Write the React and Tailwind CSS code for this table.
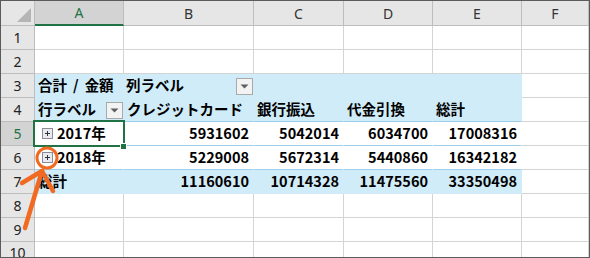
import React from 'react';

// Sheet geometry: row header + columns A..F, header row + rows 1..10
const COLS = ['A', 'B', 'C', 'D', 'E', 'F'];
const ROWS = [1, 2, 3, 4, 5, 6, 7, 8, 9, 10];

const cellFont = { fontFamily: '"Noto Sans CJK JP", "Noto Sans", sans-serif' };
const headFont = { fontFamily: '"Noto Sans", "Liberation Sans", sans-serif' };

const pivotRows = {
    5: { label: '2017年', values: ['5931602', '5042014', '6034700', '17008316'] },
    6: { label: '2018年', values: ['5229008', '5672314', '5440860', '16342182'] },
    7: { label: '総計', values: ['11160610', '10714328', '11475560', '33350498'] },
};

const FilterButton = () => (
    <span className="ml-auto mb-[1px] w-[17px] h-[17px] shrink-0 flex items-center justify-center border border-[#a9a9a9] bg-[#f3f3f3]">
        <svg width="9" height="5" viewBox="0 0 9 5">
            <path d="M0.5 0.5 L8.5 0.5 L4.5 4.5 Z" fill="#5f5f5f" />
        </svg>
    </span>
);

const ExpandBox = () => (
    <svg width="11" height="11" viewBox="0 0 11 11" className="shrink-0 mr-[4px]">
        <rect x="0.5" y="0.5" width="10" height="10" fill="#e9e9f0" stroke="#8b8b99" />
        <path d="M3 5.5 H8 M5.5 3 V8" stroke="#333" strokeWidth="1" />
    </svg>
);

// Contents and styling for one body cell
const renderCell = (row, colIdx) => {
    const inPivot = row >= 3 && row <= 7 && colIdx <= 4;
    if (!inPivot) {
        return { cls: 'bg-white border-r border-b border-[#d4d4d4]', body: null };
    }

    const blueRow = row === 3 || row === 4 || row === 7;
    const bg = blueRow ? 'bg-[#d0ecf9]' : 'bg-white';
    const right = blueRow ? 'border-r border-r-[#d0ecf9]' : 'border-r border-r-white';
    const bottom = row === 3 || row === 7 ? 'border-b border-b-[#d0ecf9]' : 'border-b border-b-[#9dcfea]';
    const cls = `${bg} ${right} ${bottom}`;

    let body = null;
    if (row === 3) {
        if (colIdx === 0) body = (
            <span className="self-center pl-[3px]">
                合計<span className="mx-[6px]">/</span>金額
            </span>
        );
        if (colIdx === 1) body = (
            <>
                <span className="self-center pl-[2px]">列ラベル</span>
                <FilterButton />
            </>
        );
    } else if (row === 4) {
        const heads = ['行ラベル', 'クレジットカード', '銀行振込', '代金引換', '総計'];
        body = (
            <>
                <span className="self-center pl-[3px] whitespace-nowrap">{heads[colIdx]}</span>
                {colIdx === 0 && <FilterButton />}
            </>
        );
    } else {
        const data = pivotRows[row];
        if (colIdx === 0) {
            body = row === 7 ? (
                <span className="self-center pl-[3px]">{data.label}</span>
            ) : (
                <span className="self-center pl-[7px] flex items-center">
                    <ExpandBox />
                    {data.label}
                </span>
            );
        } else {
            body = <span className="self-center ml-auto pr-[4px]">{data.values[colIdx - 1]}</span>;
        }
    }
    return { cls, body };
};

const App = () => {
    return (
        <div className="w-[590px] h-[258px] bg-white">
            <div className="relative w-[590px] h-[258px] border border-[#5b5b5b] overflow-hidden">
                <div className="grid grid-cols-[34px_89px_130px_90px_89px_89px_1fr] grid-rows-[25px_repeat(9,24px)_1fr] h-full">
                    {/* corner */}
                    <div className="relative bg-[#e6e6e6] border-r border-b border-[#bdbdbd]">
                        <svg width="14" height="14" viewBox="0 0 14 14" className="absolute right-[3px] bottom-[3px]">
                            <path d="M14 0 L14 14 L0 14 Z" fill="#b5b5b5" />
                        </svg>
                    </div>

                    {/* column letters */}
                    {COLS.map((c) => (
                        <div
                            key={c}
                            style={headFont}
                            className={`flex items-center justify-center text-[14px] ${
                                c === 'A'
                                    ? 'bg-[#d3d3d3] text-[#217346] border-r border-r-[#bdbdbd] border-b-2 border-b-[#217346]'
                                    : 'bg-[#e6e6e6] text-[#333] border-r border-b border-[#bdbdbd]'
                            }`}
                        >
                            {c}
                        </div>
                    ))}

                    {ROWS.map((r) => (
                        <React.Fragment key={r}>
                            <div
                                style={headFont}
                                className={`flex items-center justify-center text-[14px] border-r border-b border-[#bdbdbd] ${
                                    r === 5 ? 'bg-[#d3d3d3] text-[#217346]' : 'bg-[#e6e6e6] text-[#222]'
                                }`}
                            >
                                {r}
                            </div>
                            {COLS.map((c, i) => {
                                const { cls, body } = renderCell(r, i);
                                return (
                                    <div
                                        key={c}
                                        style={cellFont}
                                        className={`flex items-end pb-[1px] text-[14.5px] font-bold text-black leading-none overflow-visible whitespace-nowrap ${cls}`}
                                    >
                                        {body}
                                    </div>
                                );
                            })}
                        </React.Fragment>
                    ))}
                </div>

                {/* active cell A5 with fill handle */}
                <div className="absolute left-[32px] top-[119px] w-[92px] h-[27px] border-2 border-[#217346] pointer-events-none" />
                <div className="absolute left-[119px] top-[142px] w-[7px] h-[7px] bg-[#217346] border border-white" />

                {/* callout: ring and arrow */}
                <svg width="590" height="258" className="absolute left-[-1px] top-[-1px] pointer-events-none">
                    <circle cx="47" cy="158" r="10" fill="none" stroke="#f26a21" strokeWidth="3" />
                    <g stroke="#f26a21" strokeWidth="4.5" strokeLinecap="round" fill="none">
                        <path d="M25 228 L42 171" />
                        <path d="M42 171 L22 183" />
                        <path d="M42 171 L53 191" />
                    </g>
                </svg>
            </div>
        </div>
    );
};

export default App;
